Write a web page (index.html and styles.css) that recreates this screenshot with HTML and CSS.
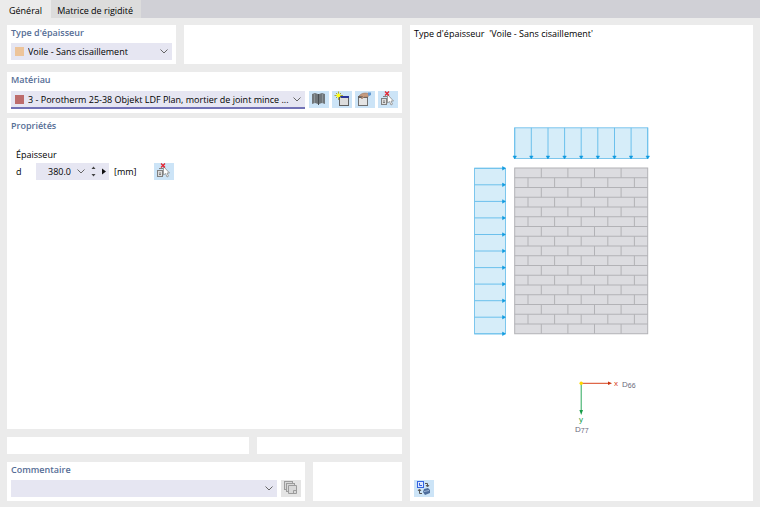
FILE: index.html
```html
<!DOCTYPE html>
<html lang="fr">

<head>
    <meta charset="UTF-8">
    <meta name="viewport" content="width=device-width, initial-scale=1.0">
    <title>Épaisseur</title>
    <link rel="stylesheet" href="styles.css">
</head>

<body>
    <nav class="tabs" role="tablist">
        <button type="button" class="tab active" role="tab" aria-selected="true">Général</button>
        <button type="button" class="tab" role="tab" aria-selected="false">Matrice de rigidité</button>
    </nav>

    <main>
        <div class="left">
            <div class="row row-type">
                <section class="panel">
                    <label class="title" for="type">Type d'épaisseur</label>
                    <div class="combo">
                        <span class="swatch swatch-type"></span>
                        <select id="type">
                            <option>Voile - Sans cisaillement</option>
                        </select>
                        <svg class="chevron" viewBox="0 0 8 5"><path d="M0.5 0.5L4 4L7.5 0.5" /></svg>
                    </div>
                </section>
                <section class="panel"></section>
            </div>

            <section class="panel panel-material">
                <label class="title" for="material">Matériau</label>
                <div class="line">
                    <div class="combo focused">
                        <span class="swatch swatch-material"></span>
                        <select id="material">
                            <option>3 - Porotherm 25-38 Objekt LDF Plan, mortier de joint mince ...</option>
                        </select>
                        <svg class="chevron" viewBox="0 0 8 5"><path d="M0.5 0.5L4 4L7.5 0.5" /></svg>
                    </div>
                    <div class="tools">
                        <button type="button" class="tool" aria-label="Bibliothèque">
                            <svg viewBox="0 0 20 17">
                                <path d="M3 3L6 2L9 3V13L6 12L3 13z" fill="#70767a" />
                                <path d="M16 3L13 2L10 3V13L13 12L16 13z" fill="#70767a" />
                                <path d="M5.5 3V12M13.5 3V12" stroke="#8c9498" />
                                <path d="M9.5 3V14" stroke="#464c50" />
                            </svg>
                        </button>
                        <button type="button" class="tool" aria-label="Nouveau">
                            <svg viewBox="0 0 20 17">
                                <rect x="7.5" y="5.5" width="9" height="9" fill="#dcdcdc" stroke="#606060" />
                                <path d="M7 6H17" stroke="#28349a" stroke-width="2" />
                                <path d="M6.5 0.5V9M2.5 4.5H11M4 2L9 7M9 2L4 7" stroke="#a8a83c" />
                                <circle cx="6.5" cy="4.5" r="2" fill="#ffff18" />
                            </svg>
                        </button>
                        <button type="button" class="tool" aria-label="Modifier">
                            <svg viewBox="0 0 20 17">
                                <rect x="3.5" y="5.5" width="9" height="9" fill="#e4e4e4" stroke="#707070" />
                                <path d="M3 6H13" stroke="#606060" stroke-width="2" />
                                <path d="M4 5C6 2.5 8 2 11 2L14 2.5L13 6L9 6L7 8L6 7L8 5.5z" fill="#c49a7e" stroke="#94705c" stroke-width="0.5" />
                                <path d="M13 1.5H16V4L14 5L13 4z" fill="#6297cf" />
                            </svg>
                        </button>
                        <button type="button" class="tool" aria-label="Sélectionner">
                            <svg viewBox="0 0 20 17">
                                <rect x="3.5" y="7.5" width="5" height="6" fill="#ddd" stroke="#808080" />
                                <path d="M5 5.5H9M6 9V12M5 11.5H7" fill="none" stroke="#808080" />
                                <path d="M9.5 3.5V12L11.5 10.5L13 14L14.5 13.2L13 10H15.5z" fill="#fff" stroke="#888" stroke-width="0.8" />
                                <path d="M7 0.5L11 4.5M11 0.5L7 4.5" stroke="#e42430" stroke-width="1.3" />
                            </svg>
                        </button>
                    </div>
                </div>
            </section>

            <section class="panel panel-props">
                <h2 class="title">Propriétés</h2>
                <div class="group">
                    <h3>Épaisseur</h3>
                    <div class="field">
                        <label class="symbol" for="thickness">d</label>
                        <div class="number">
                            <input id="thickness" type="text" value="380.0">
                            <button type="button" class="mini" aria-label="Liste">
                                <svg width="8" height="5" viewBox="0 0 8 5"><path d="M0.5 0.5L4 4L7.5 0.5" fill="none" stroke="#666" /></svg>
                            </button>
                            <button type="button" class="mini" aria-label="Incrémenter">
                                <svg width="5" height="11" viewBox="0 0 5 11"><path d="M0.5 3L2.5 0.5L4.5 3zM0.5 8L2.5 10.5L4.5 8z" fill="#444" /></svg>
                            </button>
                            <button type="button" class="mini" aria-label="Plus">
                                <svg width="4" height="7" viewBox="0 0 4 7"><path d="M0 0.5L4 3.5L0 6.5z" fill="#111" /></svg>
                            </button>
                        </div>
                        <span class="unit">[mm]</span>
                        <button type="button" class="tool" aria-label="Sélectionner">
                            <svg viewBox="0 0 20 17">
                                <rect x="3.5" y="7.5" width="5" height="6" fill="#ddd" stroke="#808080" />
                                <path d="M5 5.5H9M6 9V12M5 11.5H7" fill="none" stroke="#808080" />
                                <path d="M9.5 3.5V12L11.5 10.5L13 14L14.5 13.2L13 10H15.5z" fill="#fff" stroke="#888" stroke-width="0.8" />
                                <path d="M7 0.5L11 4.5M11 0.5L7 4.5" stroke="#e42430" stroke-width="1.3" />
                            </svg>
                        </button>
                    </div>
                </div>
            </section>

            <div class="row row-empty">
                <section class="panel"></section>
                <section class="panel"></section>
            </div>

            <div class="row row-comment">
                <section class="panel">
                    <label class="title" for="comment">Commentaire</label>
                    <div class="line">
                        <div class="combo">
                            <select id="comment">
                                <option></option>
                            </select>
                            <svg class="chevron" viewBox="0 0 8 5"><path d="M0.5 0.5L4 4L7.5 0.5" /></svg>
                        </div>
                        <button type="button" class="tool muted" aria-label="Copier">
                            <svg viewBox="0 0 20 17">
                                <g fill="#d8d8d8" stroke="#9c9c9c">
                                    <rect x="3.5" y="1.5" width="8" height="8" />
                                    <rect x="5.5" y="3.5" width="8" height="8" />
                                    <path d="M7.5 5.5H15.5V13.5H7.5z" />
                                    <path d="M12.5 13V10.5H15" fill="none" />
                                </g>
                            </svg>
                        </button>
                    </div>
                </section>
                <section class="panel"></section>
            </div>
        </div>

        <section class="panel preview">
            <h2 class="caption">Type d'épaisseur&nbsp; 'Voile - Sans cisaillement'</h2>

            <svg class="diagram" viewBox="0 0 222 320">
                <!-- loads -->
                <g class="load">
                    <rect x="44.7" y="7.8" width="133" height="30.7" />
                    <path d="M44.7 7.8V38M61.3 7.8V38M78 7.8V38M94.6 7.8V38M111.2 7.8V38M127.8 7.8V38M144.5 7.8V38M161.1 7.8V38M177.7 7.8V38" />
                    <path class="tips" d="M43 36h3.5l-1.8 3zM59.6 36h3.5l-1.8 3zM76.2 36h3.5l-1.8 3zM92.8 36h3.5l-1.8 3zM109.5 36h3.5l-1.8 3zM126.1 36h3.5l-1.8 3zM142.7 36h3.5l-1.8 3zM159.3 36h3.5l-1.8 3zM176 36h3.5l-1.8 3z" />
                </g>
                <g class="load">
                    <rect x="4.5" y="48.3" width="31" height="165.5" />
                    <path d="M4.5 48.3H35M4.5 64.8H35M4.5 81.4H35M4.5 97.9H35M4.5 114.5H35M4.5 131H35M4.5 147.6H35M4.5 164.1H35M4.5 180.7H35M4.5 197.2H35M4.5 213.8H35" />
                    <path class="tips" d="M32.5 46.6v3.5l3-1.8zM32.5 63.1v3.5l3-1.8zM32.5 79.7v3.5l3-1.8zM32.5 96.2v3.5l3-1.8zM32.5 112.8v3.5l3-1.8zM32.5 129.3v3.5l3-1.8zM32.5 145.9v3.5l3-1.8zM32.5 162.4v3.5l3-1.8zM32.5 179v3.5l3-1.8zM32.5 195.5v3.5l3-1.8zM32.5 212.1v3.5l3-1.8z" />
                </g>

                <!-- wall -->
                <g class="wall">
                    <rect x="44.7" y="48" width="133" height="165.75" />
                    <path d="M44.7 57.75h133M44.7 67.5h133M44.7 77.25h133M44.7 87h133M44.7 96.75h133M44.7 106.5h133M44.7 116.25h133M44.7 126h133M44.7 135.75h133M44.7 145.5h133M44.7 155.25h133M44.7 165h133M44.7 174.75h133M44.7 184.5h133M44.7 194.25h133M44.7 204h133" />
                    <path class="joints" d="M71.3 48v165.75M97.9 48v165.75M124.5 48v165.75M151.1 48v165.75" />
                    <path class="joints" d="M58 57.75v156M84.6 57.75v156M111.2 57.75v156M137.8 57.75v156M164.4 57.75v156" />
                </g>

                <!-- axes -->
                <path d="M111.2 263.3H139" stroke="#d8431c" />
                <path d="M138 261.5V265.1L142 263.3z" fill="#c8310c" />
                <path d="M111.2 263.3V291" stroke="#2aa85c" />
                <path d="M109.4 290H113L111.2 295z" fill="#169c48" />
                <circle cx="111.2" cy="263.3" r="1.7" fill="#ffd800" />
                <text class="axis-x" x="144" y="266">x</text>
                <text class="axis-y" x="109" y="302">y</text>
                <text class="stiffness" x="152" y="267">D<tspan class="sub" dy="1">66</tspan></text>
                <text class="stiffness" x="105" y="312">D<tspan class="sub" dy="1">77</tspan></text>
            </svg>

            <button type="button" class="tool" aria-label="Changer la vue">
                <svg viewBox="0 0 20 17">
                    <rect x="3.5" y="1.5" width="6" height="6" fill="#dce8ff" stroke="#3464e0" />
                    <path d="M5.5 3V5.5H8" fill="none" stroke="#3464e0" />
                    <path d="M11 3.5H13.5V6M12 5L13.5 7L15 5M8 13.5H5.5V10M4 11L5.5 9L7 11" fill="none" stroke="#555" />
                    <path d="M10 9L14 8L16 10V13L11 15L9 12z" fill="#4d6d9c" />
                    <path d="M10 11.5L15 10.5" stroke="#9db6d8" />
                </svg>
            </button>
        </section>
    </main>
</body>

</html>
```
FILE: styles.css
```css
* {
    box-sizing: border-box;
}

body {
    margin: 0;
    min-height: 100vh;
    display: flex;
    flex-direction: column;
    background-color: #ebebeb;
    font-family: "Open Sans", "Noto Sans", sans-serif;
    font-size: 9px;
    line-height: 14px;
    font-weight: 500;
    color: #000;
}

button,
input,
select {
    font: inherit;
    color: inherit;
    margin: 0;
    padding: 0;
    border: 0;
    border-radius: 0;
    background: none;
}

h2,
h3 {
    margin: 0;
    font-size: 9px;
    font-weight: 500;
}

.tabs {
    display: flex;
    height: 18px;
    background-color: #d0d0d6;
}

.tab {
    padding: 3px 8px 0 6px;
    background-color: #dcdcdc;
}

.tab.active {
    padding: 3px 9px 0;
    background-color: #ebebeb;
}

main {
    flex: 1;
    display: grid;
    grid-template-columns: 395fr 343fr;
    gap: 8px;
    padding: 7px 7px 6px;
}

.left {
    min-width: 0;
    display: flex;
    flex-direction: column;
    gap: 8px;
}

.panel {
    min-width: 0;
    padding: 1px 4px 4px;
    background-color: #fff;
}

.row {
    display: grid;
    gap: 8px;
}

.row-type {
    grid-template-columns: 169fr 218fr;
}

.row-empty {
    grid-template-columns: 242fr 145fr;
    min-height: 17px;
}

.row-comment {
    grid-template-columns: 298fr 89fr;
}

.panel-props {
    flex: 1;
    margin-top: -3px;
}

.title {
    display: block;
    margin-bottom: 3px;
    font-weight: 600;
    color: #566e96;
}

.panel-material .title {
    margin-bottom: 4px;
}

.line {
    display: flex;
    gap: 4px;
}

.combo {
    position: relative;
    flex: 1;
    min-width: 0;
    height: 17px;
    display: flex;
    align-items: center;
    background-color: #e6e6f2;
}

.combo.focused {
    height: 18px;
    border-bottom: 2px solid #7272b6;
}

.combo select {
    flex: 1;
    min-width: 0;
    height: 16px;
    padding: 1px 0 0 4px;
    appearance: none;
    outline: none;
}

.swatch {
    width: 9px;
    height: 9px;
    margin-left: 4px;
}

.swatch-type {
    background-color: #edc49a;
}

.swatch-material {
    background-color: #bd6c6c;
}

.chevron {
    position: absolute;
    right: 4px;
    width: 8px;
    height: 5px;
    fill: none;
    stroke: #666;
    pointer-events: none;
}

.tools {
    display: flex;
    gap: 3px;
}

.tool {
    width: 20px;
    height: 17px;
    flex: none;
    background-color: #cce4f7;
}

.tool svg {
    display: block;
    width: 20px;
    height: 17px;
}

.tool.muted {
    background-color: #e4e4e4;
}

.group {
    padding: 12px 5px 0;
}

.field {
    display: flex;
    align-items: center;
    margin-top: 1px;
}

.symbol {
    width: 20px;
}

.number {
    display: flex;
    align-items: center;
    height: 17px;
    padding-right: 3px;
    gap: 6px;
    background-color: #e6e6f2;
}

.number input {
    width: 35px;
    padding-top: 1px;
    text-align: right;
    outline: none;
}

.mini svg {
    display: block;
}

.unit {
    width: 45px;
    padding-left: 5px;
}

.preview {
    display: flex;
    flex-direction: column;
    align-items: flex-start;
}

.caption {
    margin-top: 1px;
}

.diagram {
    width: 222px;
    margin: auto;
    padding: 38px 2px 0 0;
    box-sizing: content-box;
    font-family: "Liberation Sans", Arial, sans-serif;
    font-size: 8px;
}

.load rect {
    fill: #d6edf9;
    stroke: #7cc6ed;
}

.load path {
    stroke: #6cc0ec;
}

.load .tips {
    fill: #0f9be0;
    stroke: #0f9be0;
    stroke-width: 0.5;
}

.wall {
    fill: #dcdce0;
    stroke: #b2b2b6;
}

.wall .joints {
    stroke-dasharray: 9.75 9.75;
}

.axis-x {
    fill: #d8431c;
}

.axis-y {
    fill: #169c48;
}

.stiffness {
    fill: #6a6a7c;
}

.sub {
    font-size: 7px;
}
```
